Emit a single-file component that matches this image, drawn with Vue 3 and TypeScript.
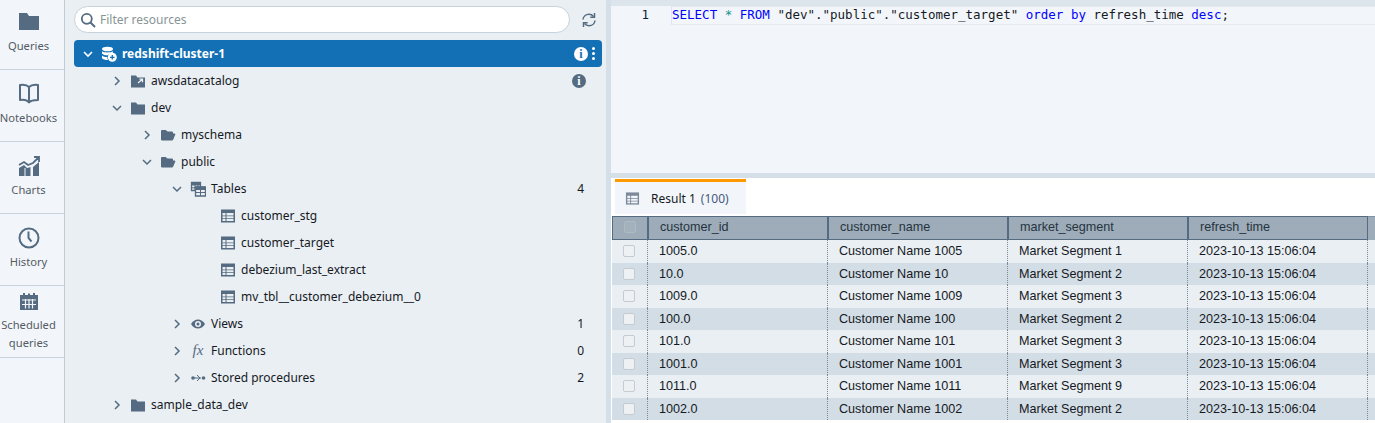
<script setup lang="ts">
interface TreeRow {
  label: string
  depth: number
  chevron?: 'open' | 'closed'
  icon: string
  count?: number
  info?: boolean
}

const nav = [
  { label: ['Queries'], icon: 'folder' },
  { label: ['Notebooks'], icon: 'book' },
  { label: ['Charts'], icon: 'chart' },
  { label: ['History'], icon: 'clock' },
  { label: ['Scheduled', 'queries'], icon: 'calendar' }
]

const rows: TreeRow[] = [
  { label: 'awsdatacatalog', depth: 0, chevron: 'closed', icon: 'catalog', info: true },
  { label: 'dev', depth: 0, chevron: 'open', icon: 'folder' },
  { label: 'myschema', depth: 1, chevron: 'closed', icon: 'folderOpen' },
  { label: 'public', depth: 1, chevron: 'open', icon: 'folderOpen' },
  { label: 'Tables', depth: 2, chevron: 'open', icon: 'tables', count: 4 },
  { label: 'customer_stg', depth: 3, icon: 'table' },
  { label: 'customer_target', depth: 3, icon: 'table' },
  { label: 'debezium_last_extract', depth: 3, icon: 'table' },
  { label: 'mv_tbl__customer_debezium__0', depth: 3, icon: 'table' },
  { label: 'Views', depth: 2, chevron: 'closed', icon: 'eye', count: 1 },
  { label: 'Functions', depth: 2, chevron: 'closed', icon: 'fx', count: 0 },
  { label: 'Stored procedures', depth: 2, chevron: 'closed', icon: 'proc', count: 2 },
  { label: 'sample_data_dev', depth: 0, chevron: 'closed', icon: 'folder' }
]

const results = [
  ['1005.0', 'Customer Name 1005', 'Market Segment 1'],
  ['10.0', 'Customer Name 10', 'Market Segment 2'],
  ['1009.0', 'Customer Name 1009', 'Market Segment 3'],
  ['100.0', 'Customer Name 100', 'Market Segment 2'],
  ['101.0', 'Customer Name 101', 'Market Segment 3'],
  ['1001.0', 'Customer Name 1001', 'Market Segment 3'],
  ['1011.0', 'Customer Name 1011', 'Market Segment 9'],
  ['1002.0', 'Customer Name 1002', 'Market Segment 2']
]

const columns = ['customer_id', 'customer_name', 'market_segment', 'refresh_time']
</script>

<template>
  <div class="page">
    <nav class="rail">
      <div v-for="item in nav" :key="item.icon" class="rail-item">
        <svg class="rail-icon" viewBox="0 0 24 24" width="24" height="24">
          <path v-if="item.icon === 'folder'" d="M2 3h8l2 3h10v14H2z" fill="#546b81" />
          <path v-else-if="item.icon === 'book'" d="M12 5C10 3 6 2.500 3 3v15c3-.5 7 0 9 2.500 2-2.500 6-2.500 9-2.500V3c-3-.5-7 0-9 2zm0 0v15.500" fill="none" stroke="#546b81" stroke-width="2" stroke-linejoin="round" />
          <template v-else-if="item.icon === 'chart'">
            <path d="M2 14l5-3 3 3 4-1v9H2zM16 13l6-5v14h-6z" fill="#546b81" />
            <path d="M2 11l5-3 4 3 5-2 5-5M17 3h5v5" fill="none" stroke="#546b81" stroke-width="1.800" />
            <path d="M8 14v8M14 13v9" stroke="#f2f6fa" stroke-width="1" />
          </template>
          <template v-else-if="item.icon === 'clock'">
            <circle cx="12" cy="12" r="9.500" fill="none" stroke="#546b81" stroke-width="2" />
            <path d="M11.500 5.500V12l3 3.500" fill="none" stroke="#546b81" stroke-width="2" />
          </template>
          <template v-else>
            <path d="M3 4h18v15H3z" fill="#546b81" />
            <path d="M7 2v4M17 2v4M12 2.500v2" stroke="#546b81" stroke-width="2" />
            <path d="M5 9h14M5 13.500h14M8.500 8v9.500M12 8v9.500M15.500 8v9.500" stroke="#f2f6fa" stroke-width="1.200" />
          </template>
        </svg>
        <span v-for="line in item.label" :key="line" class="rail-label">{{ line }}</span>
      </div>
    </nav>

    <aside class="tree-panel">
      <div class="filter-row">
        <div class="filter">
          <svg viewBox="0 0 16 16" width="16" height="16">
            <circle cx="6.800" cy="6.800" r="5" fill="none" stroke="#546b81" stroke-width="1.800" />
            <path d="M10.500 10.500l4.500 4.500" stroke="#546b81" stroke-width="2" />
          </svg>
          <span>Filter resources</span>
        </div>
        <svg class="refresh" viewBox="0 0 16 16" width="16" height="16">
          <path d="M2 7.500C2.300 4.500 4.800 2.300 8 2.300c2 0 3.500 1 4.500 2.200M14 8.500c-.3 3-2.800 5.200-6 5.200-2 0-3.500-1-4.500-2.200" fill="none" stroke="#546b81" stroke-width="1.500" />
          <path d="M13.500 1v4.200H9.300M2.500 15v-4.200h4.200" fill="none" stroke="#546b81" stroke-width="1.500" />
        </svg>
      </div>

      <div class="cluster">
        <svg class="chev" viewBox="0 0 12 12" width="12" height="12">
          <path d="M2 4l4 4 4-4" fill="none" stroke="#fff" stroke-width="1.600" />
        </svg>
        <svg class="cluster-icon" viewBox="0 0 16 16" width="16" height="16">
          <ellipse cx="6.500" cy="3" rx="5.500" ry="2.300" fill="#fff" />
          <path d="M1 5.200c1 1.600 9 1.600 11 0v1.600c-3 .5-4.500 1.700-5 2.500-3 0-5-.5-6-1.800zM1 9.500c1 1 3.500 1.500 5.300 1.500 0 1 .2 2 .7 3-3 0-5-.7-6-1.800z" fill="#fff" />
          <circle cx="11.300" cy="11.300" r="4.500" fill="#fff" />
          <path d="M11.300 9v4.600M9 11.300h4.600" stroke="#1370b5" stroke-width="1.300" />
        </svg>
        <strong>redshift-cluster-1</strong>
        <span class="info info-light">i</span>
        <span class="kebab"><i></i><i></i><i></i></span>
      </div>

      <div v-for="row in rows" :key="row.label" class="tree-row" :class="'depth-' + row.depth">
        <span class="chev-slot">
          <svg v-if="row.chevron" viewBox="0 0 12 12" width="12" height="12">
            <path v-if="row.chevron === 'open'" d="M2 4l4 4 4-4" fill="none" stroke="#546b81" stroke-width="1.500" />
            <path v-else d="M4 2l4 4-4 4" fill="none" stroke="#546b81" stroke-width="1.500" />
          </svg>
        </span>
        <span v-if="row.icon === 'fx'" class="fx">fx</span>
        <svg v-else class="tree-icon" viewBox="0 0 16 16" width="16" height="16">
          <path v-if="row.icon === 'folder'" d="M1 2.500h5l1.500 2H15v10H1z" fill="#546b81" />
          <template v-else-if="row.icon === 'catalog'">
            <path d="M1 2.500h5l1.500 2H15v10H1z" fill="#546b81" />
            <path d="M8 10l4-3.500M9.500 6.200h3v3" fill="none" stroke="#e9eff3" stroke-width="1.300" />
          </template>
          <path v-else-if="row.icon === 'folderOpen'" d="M1.500 13V3.500h4.500l1.500 1.500h5v2H4.500L1.500 13h11l2.500-6H4.500" fill="#546b81" stroke="#546b81" stroke-width="1" stroke-linejoin="round" />
          <template v-else-if="row.icon === 'tables'">
            <path d="M1.500 1.500h9v8h-9z" fill="#e9eff3" stroke="#546b81" stroke-width="1.300" />
            <path d="M1.500 1.500h9v2.500h-9zM1.500 6.800h9M5 2v8M8 2v8" fill="#546b81" stroke="#546b81" stroke-width="1" />
            <path d="M5.500 6h10v9h-10z" fill="#e9eff3" stroke="#546b81" stroke-width="1.300" />
            <path d="M5.500 6h10v2.500h-10zM5.500 11.500h10M10.500 7v8" fill="#546b81" stroke="#546b81" stroke-width="1" />
          </template>
          <template v-else-if="row.icon === 'table'">
            <path d="M1 1.500h14v13H1z" fill="#546b81" />
            <path d="M2.500 5h3v2.400h-3zM6.500 5h7v2.400h-7zM2.500 8.200h3v2.100h-3zM6.500 8.200h7v2.100h-7zM2.500 11.100h3v2h-3zM6.500 11.100h7v2h-7z" fill="#e9eff3" />
          </template>
          <template v-else-if="row.icon === 'eye'">
            <path d="M1 8c3.500-6 10.500-6 14 0-3.500 6-10.500 6-14 0z" fill="#546b81" />
            <circle cx="8" cy="8" r="3" fill="#e9eff3" />
            <circle cx="8" cy="8" r="1.500" fill="#546b81" />
          </template>
          <template v-else>
            <circle cx="3" cy="8" r="1.800" fill="#546b81" />
            <circle cx="13.500" cy="8" r="1.800" fill="#546b81" />
            <path d="M4 8h7M7 5l3 3-3 3" fill="none" stroke="#546b81" stroke-width="1" />
          </template>
        </svg>
        <span class="tree-label">{{ row.label }}</span>
        <span v-if="row.count !== undefined" class="count">{{ row.count }}</span>
        <span v-if="row.info" class="info info-dark">i</span>
      </div>
    </aside>

    <main class="workspace">
      <section class="editor">
        <div class="code-line">
          <span class="gutter">1</span>
          <code class="code"><b>SELECT</b> <em>*</em> <b>FROM</b> "dev"."public"."customer_target" <b>order by</b> refresh_time <b>desc</b>;</code>
        </div>
      </section>

      <section class="results">
        <div class="tabs">
          <div class="tab">
            <svg viewBox="0 0 16 16" width="15" height="15">
              <path d="M1 1.500h14v13H1z" fill="#7d8998" />
              <path d="M2.500 5h3v2.400h-3zM6.500 5h7v2.400h-7zM2.500 8.200h3v2.100h-3zM6.500 8.200h7v2.100h-7zM2.500 11.100h3v2h-3zM6.500 11.100h7v2h-7z" fill="#f2f6fa" />
            </svg>
            <span>Result 1</span>
            <span class="tab-count">(100)</span>
          </div>
        </div>
        <div class="grid">
          <div class="head">
            <div class="check-cell head-cell"><span class="box"></span></div>
            <div v-for="col in columns" :key="col" class="head-cell">{{ col }}</div>
            <div class="rest"></div>
          </div>
          <div v-for="row in results" :key="row[0]" class="data-row">
            <div class="check-cell cell"><span class="box"></span></div>
            <div v-for="value in row" :key="value" class="cell">{{ value }}</div>
            <div class="cell">2023-10-13 15:06:04</div>
            <div class="rest"></div>
          </div>
        </div>
      </section>
    </main>
  </div>
</template>

<style>
html,
body {
  margin: 0;
  overflow: hidden;
}
</style>

<style scoped>
.page {
  display: flex;
  width: 1375px;
  height: 423px;
  overflow: hidden;
  font-family: 'Noto Sans', 'Open Sans', sans-serif;
  font-size: 12px;
  color: #16191f;
}

.rail {
  width: 64px;
  flex: none;
  background: #f2f6fa;
  border-right: 1px solid #bfccd8;
}

.rail-item {
  display: flex;
  flex-direction: column;
  align-items: center;
  height: 72px;
  box-sizing: border-box;
  padding: 12px 7px 0 0;
  border-bottom: 1px solid #c6d2dc;
}

.rail-item:nth-child(1) {
  height: 70px;
  padding-top: 10px;
}

.rail-item:nth-child(5) {
  padding-top: 5px;
}

.rail-icon {
  flex: none;
  margin-bottom: 3px;
}

.rail-item:nth-child(5) .rail-icon {
  margin-bottom: 1px;
}

.rail-label {
  line-height: 18px;
  font-size: 11.2px;
  color: #545b64;
  white-space: nowrap;
}

.tree-panel {
  width: 541px;
  flex: none;
  background: #e9eff3;
  padding: 6px 4px 0 9px;
  box-sizing: border-box;
}

.filter-row {
  display: flex;
  align-items: center;
  height: 27px;
  margin-bottom: 7px;
}

.filter {
  width: 496px;
  height: 27px;
  box-sizing: border-box;
  display: flex;
  align-items: center;
  gap: 4px;
  padding-left: 5px;
  background: #fff;
  border: 1px solid #c6d2dc;
  border-radius: 14px;
  color: #879596;
}

.refresh {
  margin-left: 11px;
}

.cluster {
  display: flex;
  align-items: center;
  height: 27px;
  padding-left: 8px;
  background: #1370b5;
  border-radius: 4px;
  color: #fff;
}

.cluster-icon {
  margin-left: 7px;
  margin-right: 5px;
}

.cluster strong {
  flex: 1;
  font-weight: 700;
}

.info {
  display: inline-flex;
  align-items: center;
  justify-content: center;
  width: 14px;
  height: 14px;
  border-radius: 50%;
  font-family: 'Liberation Serif', serif;
  font-size: 12px;
  font-weight: 700;
  line-height: 1;
}

.info-light {
  background: #fff;
  color: #1370b5;
}

.info-dark {
  background: #546b81;
  color: #fff;
  margin-right: 16px;
}

.kebab {
  display: flex;
  flex-direction: column;
  gap: 2px;
  margin: 0 7px 0 4px;
}

.kebab i {
  width: 3px;
  height: 3px;
  border-radius: 50%;
  background: #fff;
}

.tree-row {
  display: flex;
  align-items: center;
  height: 27px;
  color: #16191f;
}

.depth-0 {
  padding-left: 37px;
}

.depth-1 {
  padding-left: 67px;
}

.depth-2 {
  padding-left: 97px;
}

.depth-3 {
  padding-left: 127px;
}

.chev-slot {
  width: 12px;
  height: 12px;
  margin-right: 7px;
  flex: none;
}

.chev-slot svg {
  display: block;
}

.tree-icon {
  flex: none;
  margin-right: 5px;
}

.fx {
  width: 16px;
  margin-right: 5px;
  font-family: 'Liberation Serif', serif;
  font-style: italic;
  font-size: 15px;
  color: #546b81;
  text-align: center;
}

.tree-label {
  flex: 1;
}

.count {
  margin-right: 18px;
}

.workspace {
  flex: 1;
  display: flex;
  flex-direction: column;
  margin-left: 5px;
  box-shadow: -5px 0 0 #d5dfe7;
  min-width: 0;
}

.editor {
  height: 173px;
  box-sizing: border-box;
  padding-top: 6px;
  background: #f2f6fa;
  box-shadow: inset 0 6px 0 #dde5ec;
}

.code-line {
  display: flex;
  height: 19px;
  align-items: flex-start;
}

.gutter {
  width: 61px;
  flex: none;
  padding-right: 23px;
  box-sizing: border-box;
  text-align: right;
  line-height: 18px;
  font-family: 'DejaVu Sans Mono', monospace;
  font-size: 12.5px;
  color: #0b1f44;
}

.code {
  flex: 1;
  height: 19px;
  box-sizing: border-box;
  line-height: 15px;
  font-family: 'DejaVu Sans Mono', monospace;
  font-size: 12.5px;
  white-space: pre;
  color: #16191f;
  border: 1px solid #e4eaef;
  border-left-color: #dfe3f3;
  margin-left: -1px;
  border-right: 0;
}

.code b {
  font-weight: 400;
  color: #0000ff;
}

.code em {
  font-style: normal;
  color: #148f8f;
}

.results {
  flex: 1;
  background: #fff;
  border-top: 5px solid #d5dfe7;
  font-family: 'Liberation Sans', Arial, sans-serif;
  font-size: 12.6px;
}

.tabs {
  height: 38px;
  padding: 1px 0 0 4px;
  box-sizing: border-box;
}

.tab {
  width: 131px;
  height: 35px;
  box-sizing: border-box;
  border-top: 3px solid #ff9900;
  background: #f2f6fa;
  display: flex;
  align-items: center;
  padding-left: 10px;
  gap: 5px;
  font-family: 'Noto Sans', sans-serif;
  font-size: 12px;
  color: #16191f;
}

.tab svg {
  margin-right: 6px;
}

.tab-count {
  color: #44597a;
}

.grid {
  display: flex;
  flex-direction: column;
  margin-left: 1px;
}

.head,
.data-row {
  display: grid;
  grid-template-columns: 36px 180px 180px 180px 180px 1fr;
}

.head {
  height: 24px;
  background: #9dacb8;
  box-sizing: border-box;
}

.head-cell {
  display: flex;
  align-items: center;
  padding: 0 0 2px 11px;
  border: 1px solid #546b81;
  color: #26333f;
  box-sizing: border-box;
}

.rest {
  border-top: 1px solid #7f93a3;
}

.data-row .rest {
  border-top: 0;
}

.check-cell {
  padding-left: 11px;
}

.data-row {
  height: 22.500px;
  background: #e9eff3;
}

.data-row:nth-child(odd) {
  background: #d3dde5;
}

.cell {
  display: flex;
  align-items: center;
  padding-left: 11px;
  color: #16191f;
  border-right: 1px dotted #7d8998;
  box-sizing: border-box;
  white-space: nowrap;
}

.box {
  width: 10px;
  height: 10px;
  border: 1px solid #c5ccd1;
  background: #edf1f4;
  border-radius: 2px;
}

.head .box {
  background: #a3b1bd;
  border-color: #aebac4;
}
</style>
